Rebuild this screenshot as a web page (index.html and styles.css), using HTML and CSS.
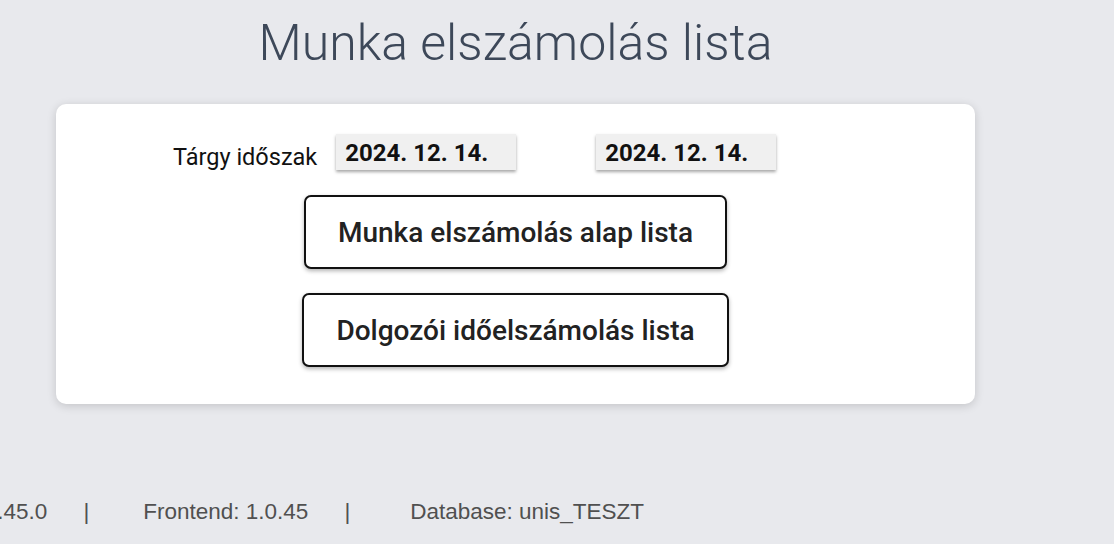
FILE: index.html
```html
<!DOCTYPE html>
<html lang="hu">
<head>
<meta charset="utf-8">
<title>Munka elszámolás lista</title>
<link rel="stylesheet" href="styles.css">
</head>
<body>
<div class="page">
  <main class="content">
    <h1 class="title">Munka elszámolás lista</h1>
    <section class="card">
      <div class="period-row">
        <span class="period-label">Tárgy időszak</span>
        <div class="date-input">2024. 12. 14.</div>
        <div class="date-input second">2024. 12. 14.</div>
      </div>
      <div class="actions">
        <button class="action-btn">Munka elszámolás alap lista</button>
        <button class="action-btn">Dolgozói időelszámolás lista</button>
      </div>
    </section>
  </main>
  <footer class="footer">
    <span class="ver">Backend: 1.0.45.0</span>
    <span class="sep">|</span>
    <span class="ver">Frontend: 1.0.45</span>
    <span class="sep">|</span>
    <span class="ver db">Database: unis_TESZT</span>
  </footer>
</div>
</body>
</html>
```

FILE: styles.css
```css
html, body {
  margin: 0;
  padding: 0;
  background: #e8e9ed;
  overflow: hidden;
}
body {
  font-family: Roboto, "Noto Sans", sans-serif;
  width: 1114px;
  height: 544px;
}
.page {
  display: flex;
  flex-direction: column;
  height: 544px;
}
.content {
  margin-left: 56px;
  width: 919px;
  display: flex;
  flex-direction: column;
  align-items: center;
}
.title {
  margin: 0;
  height: 104px;
  box-sizing: border-box;
  padding-top: 10px;
  font-weight: 300;
  font-size: 50px;
  line-height: 66px;
  color: #3d4859;
}
.card {
  align-self: stretch;
  background: #ffffff;
  border-radius: 10px;
  box-shadow: 0 2px 10px rgba(0,0,0,0.16);
  padding: 30px 0 37px;
  display: flex;
  flex-direction: column;
  align-items: center;
}
.period-row {
  align-self: stretch;
  display: flex;
  align-items: center;
  padding-left: 117px;
  height: 36px;
}
.period-label {
  font-size: 23.5px;
  color: #111;
  margin-right: 19px;
  padding-top: 9px;
}
.date-input {
  width: 180px;
  height: 36px;
  box-sizing: border-box;
  background: #f0f0f0;
  box-shadow: 0 2px 3px rgba(0,0,0,0.35);
  font-weight: 700;
  font-size: 24px;
  color: #111;
  padding: 0 0 0 9px;
  line-height: 38px;
}
.date-input.second {
  margin-left: 80px;
}
.actions {
  display: flex;
  flex-direction: column;
  align-items: center;
  gap: 24px;
  margin-top: 25px;
}
.action-btn {
  font-family: Roboto, "Noto Sans", sans-serif;
  font-weight: 500;
  font-size: 28px;
  color: #222;
  background: #fff;
  border: 2px solid #111;
  border-radius: 7px;
  box-shadow: 0 2px 4px rgba(0,0,0,0.3);
  height: 74px;
  padding: 0 32px;
}
.footer {
  margin-top: auto;
  height: 44px;
  display: flex;
  align-items: flex-start;
  margin-left: -134px;
  font-family: "Liberation Sans", Arial, sans-serif;
  font-size: 22.5px;
  color: #505050;
}
.ver {
  line-height: 24px;
}
.ver.db {
  margin-left: 6px;
}
.sep {
  line-height: 24px;
  margin: 0 54px 0 36px;
}
```
